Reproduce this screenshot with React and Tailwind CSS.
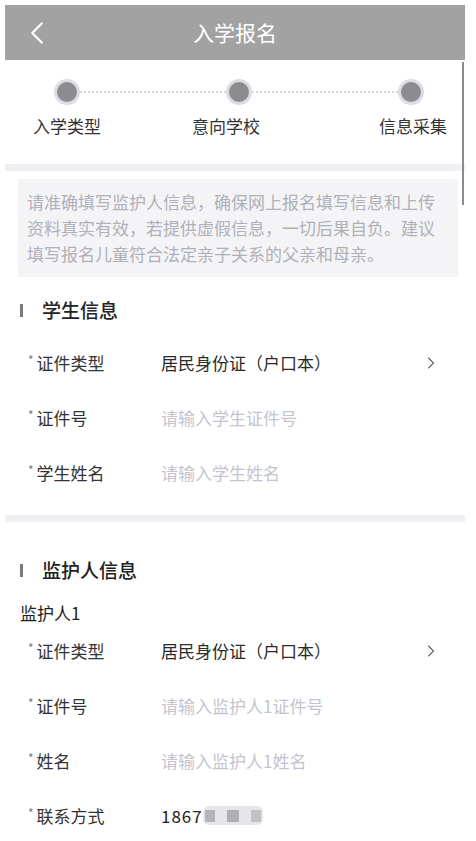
import { ChevronLeft, ChevronRight } from 'lucide-react'

const font = { fontFamily: '"Noto Sans CJK SC", "Noto Sans", sans-serif' }

const studentRows = [
  { label: '证件类型', value: '居民身份证（户口本）', arrow: true },
  { label: '证件号', placeholder: '请输入学生证件号' },
  { label: '学生姓名', placeholder: '请输入学生姓名' },
]

const guardianRows = [
  { label: '证件类型', value: '居民身份证（户口本）', arrow: true },
  { label: '证件号', placeholder: '请输入监护人1证件号' },
  { label: '姓名', placeholder: '请输入监护人1姓名' },
  { label: '联系方式', phone: true },
]

function FormRow({ row }) {
  return (
    <div className="flex h-[55px] items-center pl-[23px] pr-[24px] text-[17px]">
      <div className="flex w-[133px] items-center">
        <span className="mr-[3px] -mt-[6px] text-[12px] text-[#777]">*</span>
        <span className="text-[#333]">{row.label}</span>
      </div>
      <div className="flex flex-1 items-center">
        {row.value && <span className="text-[#2b2b2b]">{row.value}</span>}
        {row.placeholder && <span className="text-[#c3c4d0]">{row.placeholder}</span>}
        {row.phone && (
          <div className="flex items-center">
            <span className="text-[17px] tracking-[1px] text-[#222]">1867</span>
            <div className="flex h-[19px] w-[60px] items-center gap-[12px] rounded-[6px] bg-[#e6e6e8] px-[2px]">
              <span className="h-[12px] w-[11px] bg-[#b5b5b8]" />
              <span className="h-[12px] w-[13px] bg-[#b0b0b3]" />
              <span className="h-[12px] w-[10px] bg-[#c2c2c5]" />
            </div>
          </div>
        )}
      </div>
      {row.arrow && <ChevronRight size={20} strokeWidth={1.3} className="text-[#666]" />}
    </div>
  )
}

function SectionTitle({ children }) {
  return (
    <div className="flex h-[30px] items-center pl-[15px]">
      <span className="h-[13px] w-[3px] bg-[#7a7a7a]" />
      <span className="ml-[19px] text-[19px] font-medium text-[#222]">{children}</span>
    </div>
  )
}

function Step({ label }) {
  return <span className="w-[68px] text-center text-[17px] text-[#333]">{label}</span>
}

function Dot() {
  return (
    <span className="flex h-[26px] w-[26px] items-center justify-center rounded-full bg-[#dcdce4]">
      <span className="h-[20px] w-[20px] rounded-full bg-[#8c8c8e]" />
    </span>
  )
}

export default function App() {
  return (
    <div className="relative min-h-[841px] bg-white pl-[5px] pr-[11px] pt-[5px]" style={font}>
      <header className="relative flex h-[55px] items-center justify-center bg-[#a2a2a2]">
        <ChevronLeft size={38} strokeWidth={1.4} className="absolute left-[13px] text-white" />
        <h1 className="text-[21px] text-white">入学报名</h1>
      </header>

      <div className="absolute right-[12px] top-[62px] h-[143px] w-[2px] bg-[#8a8a94]" />

      <section className="pt-[19px]">
        <div className="flex items-center pl-[49px] pr-[41px]">
          <Dot />
          <span className="flex-1 border-t-2 border-dotted border-[#d6d6dc]" />
          <Dot />
          <span className="flex-1 border-t-2 border-dotted border-[#d6d6dc]" />
          <Dot />
        </div>
        <div className="mt-[8px] flex pl-[28px]">
          <Step label="入学类型" />
          <span className="w-[91px]" />
          <Step label="意向学校" />
          <span className="w-[119px]" />
          <Step label="信息采集" />
        </div>
      </section>

      <div className="mt-[25px] h-[7px] bg-[#efeff4]" />

      <div className="ml-[13px] mr-[7px] mt-[8px] bg-[#f4f4f7] px-[9px] py-[10px] text-[17px] leading-[26px] text-[#b0b0b8]">
        请准确填写监护人信息，确保网上报名填写信息和上传资料真实有效，若提供虚假信息，一切后果自负。建议填写报名儿童符合法定亲子关系的父亲和母亲。
      </div>

      <div className="mt-[19px]">
        <SectionTitle>学生信息</SectionTitle>
      </div>
      <div className="mt-[10px]">
        {studentRows.map((row) => (
          <FormRow key={row.label} row={row} />
        ))}
      </div>

      <div className="mt-[14px] h-[7px] bg-[#efeff4]" />

      <div className="mt-[34px]">
        <SectionTitle>监护人信息</SectionTitle>
      </div>
      <p className="mt-[14px] pl-[15px] text-[17px] text-[#222]">监护人1</p>
      <div className="-mt-[2px]">
        {guardianRows.map((row) => (
          <FormRow key={row.label} row={row} />
        ))}
      </div>
    </div>
  )
}
